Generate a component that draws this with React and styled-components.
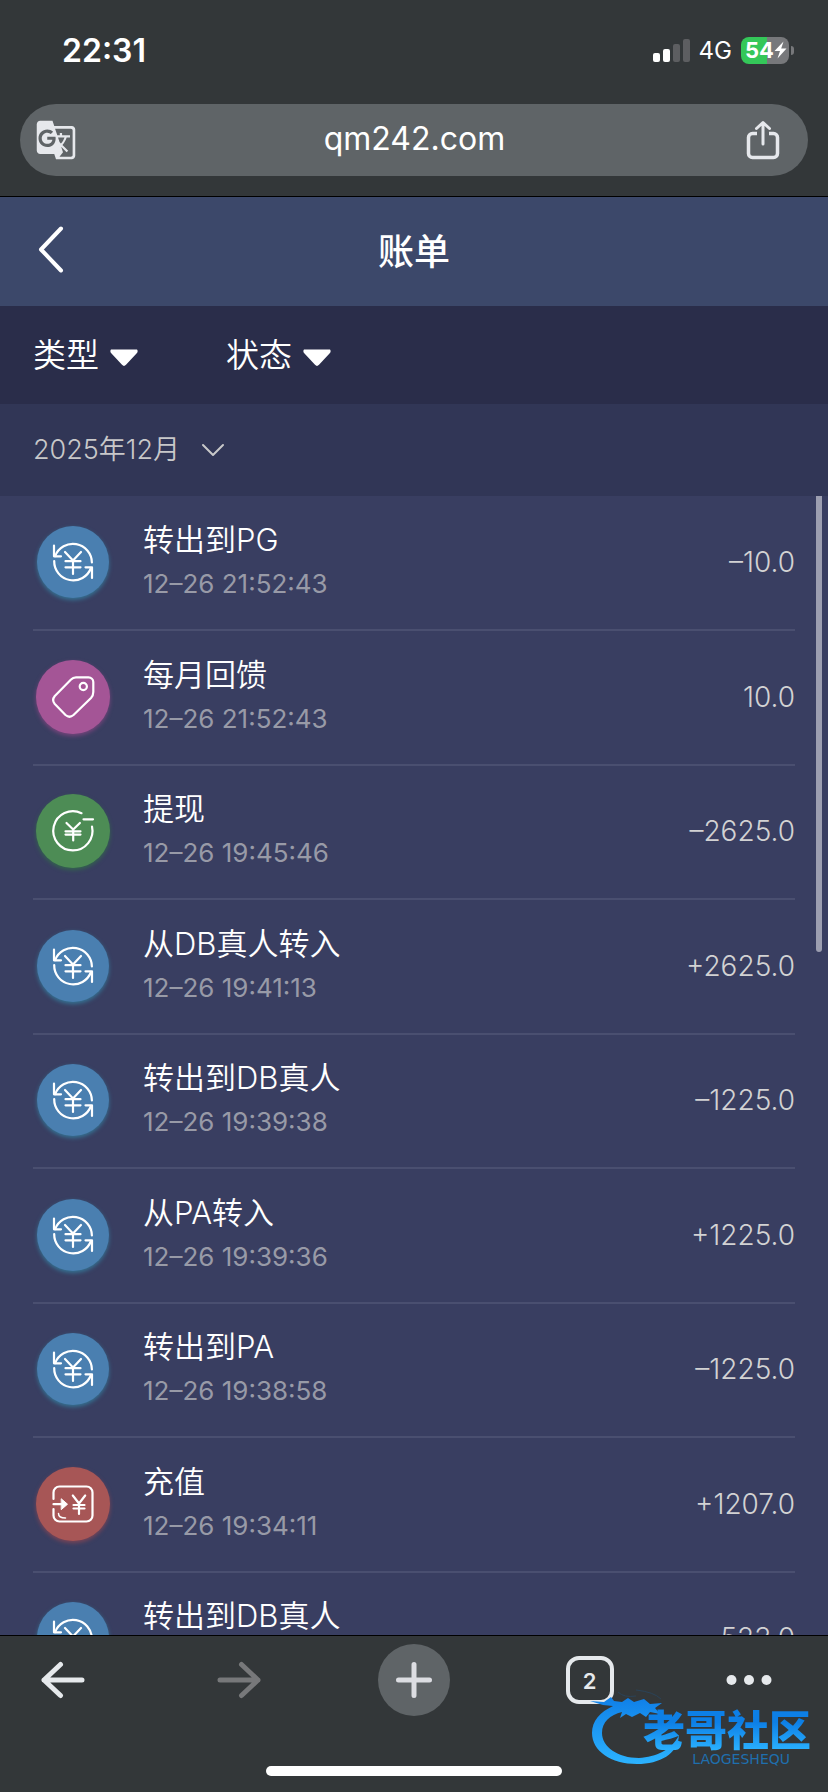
import React, { useState } from 'react';
import styled, { createGlobalStyle } from 'styled-components';
import { MdGTranslate } from 'react-icons/md';

const GlobalStyle = createGlobalStyle`
  *, *::before, *::after {
    box-sizing: border-box;
  }
  body {
    margin: 0;
    background: #333739;
    font-family: Inter, 'Noto Sans CJK SC', sans-serif;
    color: #fff;
  }
  button, input, select {
    font-family: inherit;
    color: inherit;
  }
  button {
    padding: 0;
    border: 0;
    background: none;
    cursor: pointer;
  }
`;

const Screen = styled.div`
  height: 100vh;
  display: flex;
  flex-direction: column;
  position: relative;
  overflow: hidden;
`;

const BrowserTop = styled.div`
  flex: none;
  padding: 0 20px 20px;
  background: #333739;
  border-bottom: 1px solid #000;
`;

const StatusBar = styled.div`
  height: 104px;
  padding: 0 14px 4px 42px;
  display: flex;
  align-items: center;
  justify-content: space-between;
`;

const Clock = styled.time`
  font-size: 32px;
  font-weight: 600;
`;

const StatusRight = styled.div`
  display: flex;
  align-items: center;
  gap: 9px;
`;

const Network = styled.span`
  font-size: 24px;
`;

const Battery = styled.div`
  display: flex;
  align-items: center;
  gap: 2px;
`;

const BatteryBody = styled.div`
  width: 48px;
  height: 27px;
  padding-left: 4px;
  border-radius: 8px;
  display: flex;
  align-items: center;
  background: linear-gradient(90deg, #34c759 54%, #77787b 54%);
  font-size: 22px;
  font-weight: 700;
  line-height: 27px;
  svg {
    flex: none;
  }
`;

const BatteryTip = styled.span`
  width: 3px;
  height: 9px;
  border-radius: 0 4px 4px 0;
  background: #77787b;
`;

const AddressBar = styled.div`
  height: 72px;
  padding: 0 28px 0 15px;
  border-radius: 36px;
  display: flex;
  align-items: center;
  justify-content: space-between;
  gap: 16px;
  background: #5f6467;
`;

const BarButton = styled.button`
  display: flex;
  color: #e6e8ec;
`;

const TranslateButton = styled(BarButton)`
  width: 48px;
`;

const Address = styled.input`
  flex: 1;
  min-width: 0;
  height: 64px;
  padding: 0 0 4px;
  border: 0;
  outline: none;
  background: none;
  font-size: 32px;
  text-align: center;
`;

const Page = styled.main`
  flex: 1;
  min-height: 0;
  display: flex;
  flex-direction: column;
  background: #393e61;
`;

const Header = styled.header`
  flex: none;
  height: 109px;
  padding: 0 33px;
  display: grid;
  grid-template-columns: 36px 1fr 36px;
  align-items: center;
  background: #3c486a;
`;

const Title = styled.h1`
  margin: 0;
  font-size: 36px;
  font-weight: 500;
  line-height: 48px;
  text-align: center;
`;

const Filters = styled.div`
  flex: none;
  height: 98px;
  padding: 0 33px;
  display: flex;
  align-items: center;
  gap: 88px;
  background: #2a2d4a;
`;

const Picker = styled.label`
  display: flex;
  align-items: center;
  gap: ${(props) => props.$gap}px;
`;

const Select = styled.select`
  appearance: none;
  padding: 0;
  border: 0;
  outline: none;
  background: none;
  font-size: ${(props) => props.$size}px;
  font-weight: 350;
  line-height: 48px;
  option {
    color: #333;
  }
`;

const MonthBar = styled.div`
  flex: none;
  height: 92px;
  padding: 0 33px;
  display: flex;
  align-items: center;
  background: #313656;
  color: #c8c8c9;
`;

const ListWrap = styled.div`
  flex: 1;
  min-height: 0;
  position: relative;
`;

const List = styled.ul`
  height: 100%;
  margin: 0;
  padding: 1px 33px 0;
  overflow-y: auto;
  scrollbar-width: none;
  list-style: none;
`;

const ScrollThumb = styled.span`
  position: absolute;
  top: 0;
  right: 6px;
  width: 6px;
  height: 40%;
  border-radius: 0 0 3px 3px;
  background: #9c9eb0;
`;

const Row = styled.li`
  height: 134px;
  padding-bottom: 2px;
  display: flex;
  align-items: center;
  border-bottom: 2px solid #4a4f70;
  &:nth-child(even) {
    height: 135px;
  }
`;

const IconSlot = styled.div`
  flex: none;
  width: 80px;
  margin-right: 30px;
  display: flex;
  justify-content: center;
`;

const Disc = styled.div`
  width: ${(props) => props.$size}px;
  height: ${(props) => props.$size}px;
  border-radius: 50%;
  display: flex;
  align-items: center;
  justify-content: center;
  background: ${(props) => props.$color};
  box-shadow: 0 2px 4px ${(props) => props.$glow};
`;

const Info = styled.div`
  flex: 1;
  min-width: 0;
`;

const Name = styled.div`
  font-size: 31px;
  font-weight: 350;
  line-height: 44px;
`;

const Time = styled.div`
  font-size: 26px;
  font-weight: 400;
  line-height: 44px;
  color: #989aa7;
`;

const Amount = styled.div`
  font-size: 28px;
  font-weight: 300;
  line-height: 44px;
  color: #d2d2d3;
`;

const BrowserBottom = styled.div`
  flex: none;
  height: 157px;
  padding: 8px 20px 16px;
  display: flex;
  flex-direction: column;
  justify-content: space-between;
  align-items: center;
  background: #333739;
  border-top: 1px solid #000;
`;

const Toolbar = styled.nav`
  width: 100%;
  display: flex;
  justify-content: space-between;
`;

const ToolButton = styled.button`
  width: 86px;
  height: 72px;
  display: flex;
  align-items: center;
  justify-content: ${(props) => props.$align || 'center'};
  color: #e6e9ec;
  &:disabled {
    color: #77787a;
    cursor: default;
  }
`;

const PlusDisc = styled.span`
  width: 72px;
  height: 72px;
  border-radius: 50%;
  display: flex;
  align-items: center;
  justify-content: center;
  background: #5f6467;
  color: #dcdde2;
`;

const TabCount = styled.span`
  width: 48px;
  height: 48px;
  border: 4px solid #e6e9ec;
  border-radius: 13px;
  font-size: 22px;
  font-weight: 600;
  line-height: 42px;
  text-align: center;
`;

const HomeIndicator = styled.span`
  width: 296px;
  height: 10px;
  border-radius: 5px;
  background: #fff;
`;

const Watermark = styled.div`
  position: absolute;
  right: 17px;
  bottom: 25px;
  width: 221px;
  height: 80px;
  display: flex;
  flex-direction: column;
  align-items: flex-end;
  pointer-events: none;
`;

const Dragon = styled.svg`
  position: absolute;
  left: 0;
  top: 0;
`;

const Brand = styled.span`
  position: relative;
  padding-top: 24px;
  font-size: 42px;
  font-weight: 900;
  line-height: 40px;
  background: linear-gradient(180deg, #0d7fe6 55%, #2bb2ff);
  background-clip: text;
  color: transparent;
`;

const BrandLatin = styled.span`
  position: relative;
  padding-right: 21px;
  font-family: 'DejaVu Sans', sans-serif;
  font-size: 14px;
  line-height: 16px;
  color: #1f6fae;
`;

const line = {
  fill: 'none',
  stroke: 'currentColor',
  strokeLinecap: 'round',
  strokeLinejoin: 'round',
};

const TransferIcon = () => (
  <svg width="48" height="48" viewBox="16 16 48 48" strokeWidth="2.2" {...line}>
    <path d="M21 23.5V34.3H28" />
    <path d="M22.2 34A19 19 0 0 1 58.9 40.5" />
    <path d="M21.2 39A19 19 0 0 0 58 46" />
    <path d="M52.5 45.3H59V56" />
    <path d="M32 30l8 8.5 8-8.5M40 38.5V52M32.5 39.2h15M32.5 45.3h15" />
  </svg>
);

const TagIcon = () => (
  <svg width="48" height="48" viewBox="16 16 48 48" strokeWidth="2.2" {...line}>
    <path d="M43 20.3H55.5A4.8 4.8 0 0 1 60.3 25V35Q60.3 38.5 58 41L40.5 58Q36.5 61.5 32.5 58L21.8 47Q18.5 43 21.8 39L38 22.5Q40 20.3 43 20.3Z" />
    <circle cx="50.3" cy="29.5" r="3.6" />
  </svg>
);

const WithdrawIcon = () => (
  <svg width="48" height="48" viewBox="16 16 48 48" strokeWidth="2.2" {...line}>
    <path d="M48.5 22.2A19.6 19.6 0 1 0 59 35.5" />
    <path d="M50.5 28.3H60" />
    <path d="M33.5 32l6.7 6.5 6.7-6.5M40.2 38.5V49.5M32.5 40.3h15M32.5 43.6h15" />
  </svg>
);

const DepositIcon = () => (
  <svg width="48" height="48" viewBox="16 16 48 48" strokeWidth="2.2" {...line}>
    <path d="M20.5 35V28.5A6 6 0 0 1 26.5 22.5H53.5A6 6 0 0 1 59.5 28.5V51.5A6 6 0 0 1 53.5 57.5H26.5A6 6 0 0 1 20.5 51.5V45" />
    <path d="M20.5 40.2H30" />
    <path d="M28.5 35l6 5.2-6 5.2z" fill="currentColor" strokeWidth="1" />
    <path d="M25.5 49.5Q25.5 54 32.5 54" strokeWidth="1.5" />
    <path d="M39.8 31.5l6.2 8 6.2-8M46 39.5V50M40.5 41h11M40.5 44.5h11" />
  </svg>
);

const KINDS = {
  transfer: { icon: TransferIcon, color: '#4a7fb0', glow: '#357596', size: 72 },
  bonus: { icon: TagIcon, color: '#a45596', glow: '#7a457d', size: 74 },
  withdraw: { icon: WithdrawIcon, color: '#4d8c55', glow: '#33664d', size: 74 },
  deposit: { icon: DepositIcon, color: '#a75656', glow: '#7d4556', size: 74 },
};

const RECORDS = [
  { kind: 'transfer', name: '转出到PG', time: '12–26 21:52:43', amount: '–10.0' },
  { kind: 'bonus', name: '每月回馈', time: '12–26 21:52:43', amount: '10.0' },
  { kind: 'withdraw', name: '提现', time: '12–26 19:45:46', amount: '–2625.0' },
  { kind: 'transfer', name: '从DB真人转入', time: '12–26 19:41:13', amount: '+2625.0' },
  { kind: 'transfer', name: '转出到DB真人', time: '12–26 19:39:38', amount: '–1225.0' },
  { kind: 'transfer', name: '从PA转入', time: '12–26 19:39:36', amount: '+1225.0' },
  { kind: 'transfer', name: '转出到PA', time: '12–26 19:38:58', amount: '–1225.0' },
  { kind: 'deposit', name: '充值', time: '12–26 19:34:11', amount: '+1207.0' },
  { kind: 'transfer', name: '转出到DB真人', time: '12–26 19:33:52', amount: '–523.0' },
];

const Triangle = () => (
  <svg width="28" height="24" viewBox="0 -6 28 24">
    <path d="M1 0.5H27Q28.5 2.5 26.5 4.5L16 15.8Q14 18 12 15.8L1.5 4.5Q-0.5 2.5 1 0.5Z" fill="#fff" />
  </svg>
);

function RecordRow({ record }) {
  const { icon: Icon, color, glow, size } = KINDS[record.kind];
  return (
    <Row>
      <IconSlot>
        <Disc $color={color} $glow={glow} $size={size}>
          <Icon />
        </Disc>
      </IconSlot>
      <Info>
        <Name>{record.name}</Name>
        <Time>{record.time}</Time>
      </Info>
      <Amount>{record.amount}</Amount>
    </Row>
  );
}

function App() {
  const [address, setAddress] = useState('qm242.com');
  const [type, setType] = useState('类型');
  const [status, setStatus] = useState('状态');
  const [month, setMonth] = useState('2025年12月');

  return (
    <Screen>
      <GlobalStyle />
      <BrowserTop>
        <StatusBar>
          <Clock>22:31</Clock>
          <StatusRight>
            <svg width="37" height="24" viewBox="0 0 37 24">
              <rect x="0" y="15" width="7" height="9" rx="2" fill="#fff" />
              <rect x="10" y="11" width="7" height="13" rx="2" fill="#fff" />
              <rect x="20" y="6" width="7" height="18" rx="2" fill="#5d5e61" />
              <rect x="30" y="1" width="7" height="23" rx="2" fill="#5d5e61" />
            </svg>
            <Network>4G</Network>
            <Battery>
              <BatteryBody>
                54
                <svg width="13" height="18" viewBox="0 0 13 18">
                  <path d="M9.5 0.5L0.5 10H6L3.5 17.5L12.5 7.5H7.2Z" fill="#fff" />
                </svg>
              </BatteryBody>
              <BatteryTip />
            </Battery>
          </StatusRight>
        </StatusBar>
        <AddressBar>
          <TranslateButton aria-label="Translate">
            <MdGTranslate size={42} />
          </TranslateButton>
          <Address
            aria-label="Address"
            value={address}
            onChange={(e) => setAddress(e.target.value)}
          />
          <BarButton aria-label="Share">
            <svg width="34" height="42" viewBox="0 0 34 42" strokeWidth="3.5" {...line}>
              <path d="M11 14.5H6.5A4 4 0 0 0 2.5 18.5V34.5A4 4 0 0 0 6.5 38.5H27.5A4 4 0 0 0 31.5 34.5V18.5A4 4 0 0 0 27.5 14.5H23" strokeLinecap="butt" />
              <path d="M17 4V25M10.5 9.5L17 3.5L23.5 9.5" strokeWidth="3" />
            </svg>
          </BarButton>
        </AddressBar>
      </BrowserTop>

      <Page>
        <Header>
          <BarButton aria-label="返回">
            <svg width="36" height="56" viewBox="0 0 36 56" strokeWidth="4" {...line} stroke="#fff">
              <path d="M28 4.5L8 25.5L28 46.5" />
            </svg>
          </BarButton>
          <Title>账单</Title>
        </Header>

        <Filters>
          <Picker $gap={11}>
            <Select aria-label="类型" $size={33} value={type} onChange={(e) => setType(e.target.value)}>
              <option>类型</option>
              <option>充值</option>
              <option>提现</option>
            </Select>
            <Triangle />
          </Picker>
          <Picker $gap={11}>
            <Select aria-label="状态" $size={33} value={status} onChange={(e) => setStatus(e.target.value)}>
              <option>状态</option>
              <option>成功</option>
              <option>失败</option>
            </Select>
            <Triangle />
          </Picker>
        </Filters>

        <MonthBar>
          <Picker $gap={20}>
            <Select aria-label="月份" $size={27} value={month} onChange={(e) => setMonth(e.target.value)}>
              <option>2025年12月</option>
              <option>2025年11月</option>
            </Select>
            <svg width="24" height="14" viewBox="0 0 24 14" strokeWidth="2" {...line}>
              <path d="M2 2L12 12L22 2" />
            </svg>
          </Picker>
        </MonthBar>

        <ListWrap>
          <List>
            {RECORDS.map((record) => (
              <RecordRow key={record.time + record.name} record={record} />
            ))}
          </List>
          <ScrollThumb />
        </ListWrap>
      </Page>

      <BrowserBottom>
        <Toolbar>
          <ToolButton aria-label="Back">
            <svg width="46" height="38" viewBox="0 0 46 38" strokeWidth="5" {...line}>
              <path d="M42 19H4M20.5 3.5L4 19L20.5 34.5" />
            </svg>
          </ToolButton>
          <ToolButton aria-label="Forward" disabled>
            <svg width="46" height="38" viewBox="0 0 46 38" strokeWidth="5" {...line}>
              <path d="M4 19H42M25.5 3.5L42 19L25.5 34.5" />
            </svg>
          </ToolButton>
          <ToolButton aria-label="New tab">
            <PlusDisc>
              <svg width="38" height="38" viewBox="0 0 38 38" strokeWidth="5" {...line}>
                <path d="M19 3.5V34.5M3.5 19H34.5" />
              </svg>
            </PlusDisc>
          </ToolButton>
          <ToolButton aria-label="Tabs">
            <TabCount>2</TabCount>
          </ToolButton>
          <ToolButton aria-label="More" $align="flex-start">
            <svg width="54" height="12" viewBox="0 0 54 12" fill="currentColor">
              <circle cx="9.5" cy="6" r="5" />
              <circle cx="27" cy="6" r="5" />
              <circle cx="44.5" cy="6" r="5" />
            </svg>
          </ToolButton>
        </Toolbar>
        <HomeIndicator />
      </BrowserBottom>

      <Watermark>
        <Dragon width="92" height="80" viewBox="0 0 92 80">
          <defs>
            <linearGradient id="dragon" x1="0" y1="0" x2="0" y2="1">
              <stop offset="0" stopColor="#0f7fe8" />
              <stop offset="1" stopColor="#2cb3ff" />
            </linearGradient>
          </defs>
          <path
            fill="url(#dragon)"
            d="M0 14L14 15L21 10L24 14L32 15L38 11L44 15L54 12L60 17L72 16L65 21L70 27L60 25L56 30L50 26L42 30L36 27L30 31L32 25C20 28 12 35 12 46C12 60 28 71 49 71C66 70 82 63 89 48C88 67 70 77 47 77C21 77 2 64 2 46C2 34 10 25 23 19L13 18Z"
          />
          <path d="M28 5Q34 11 46 9M46 3Q64 5 71 12" fill="none" stroke="#2b4358" strokeWidth="1" />
        </Dragon>
        <Brand>老哥社区</Brand>
        <BrandLatin>LAOGESHEQU</BrandLatin>
      </Watermark>
    </Screen>
  );
}

export default App;
